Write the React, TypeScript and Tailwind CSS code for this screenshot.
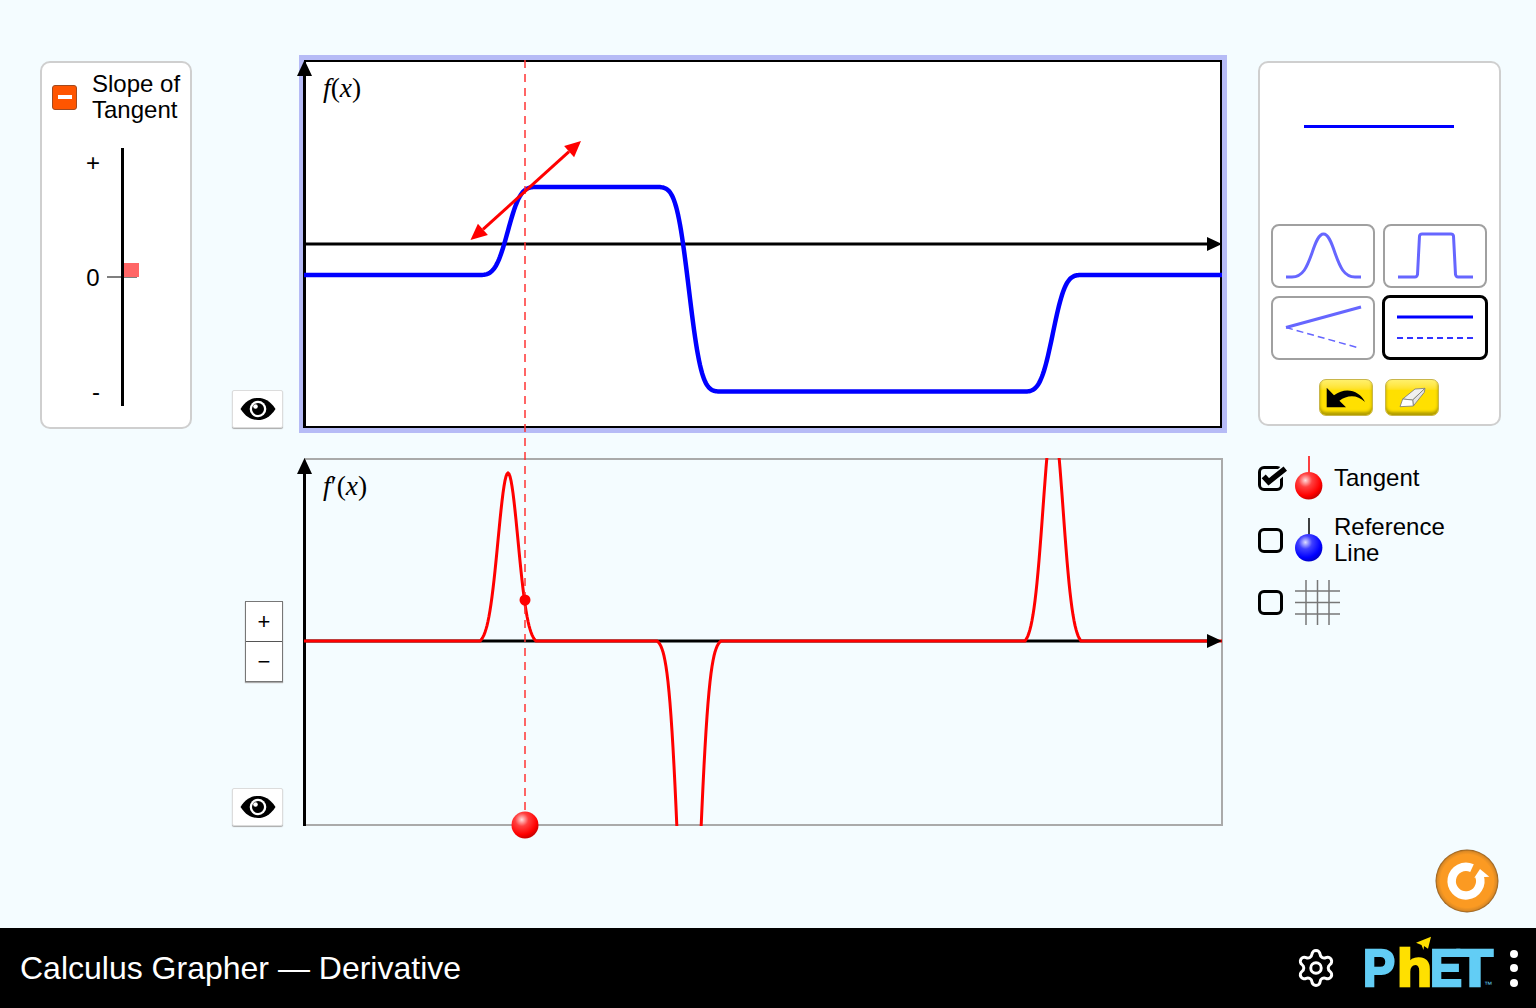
import React from "react";
import { Settings } from "lucide-react";

const S = 10;
const kernel = (x: number, c: number, e = 0.02) => {
  const g = Math.exp(-((x - c) * (x - c)) / (2 * S * S));
  return Math.max(0, (g - e) / (1 - e));
};
const area = (e: number) => {
  let a = 0;
  for (let x = -60; x <= 60; x += 0.25) a += kernel(x, 0, e) * 0.25;
  return a;
};
const AREA = area(0.02);
const AREA_WIDE = area(0.006);

function fPath() {
  const pts: string[] = [];
  let a = 0,
    b = 0,
    c = 0;
  for (let x = 304; x <= 1222; x += 0.25) {
    a += (kernel(x, 508) * 0.25) / AREA;
    b += (kernel(x, 689, 0.006) * 0.25) / AREA_WIDE;
    c += (kernel(x, 1053) * 0.25) / AREA;
    if (x % 1 === 0) pts.push(`${x},${(275 - 88 * a + 204.500 * b - 116.500 * c).toFixed(2)}`);
  }
  return "M" + pts.join("L");
}
function dPath() {
  const pts: string[] = [];
  for (let x = 304; x <= 1222; x += 1) {
    const y = 641 - 168 * kernel(x, 508) + 390 * kernel(x, 689, 0.006) - 222 * kernel(x, 1053);
    pts.push(`${x},${y.toFixed(2)}`);
  }
  return "M" + pts.join("L");
}

function Eye() {
  return (
    <button className="w-[51px] h-[38px] bg-white border border-[#dcdcdc] rounded-[2px] shadow-[0_1px_1px_#aaa] flex items-center justify-center">
      <svg width="36" height="24" viewBox="0 0 36 24">
        <path d="M0.500 12C6 3.500 12 1 18 1s12 2.500 17.500 11C30 20.500 24 23 18 23S6 20.500 0.500 12Z" fill="#000" />
        <circle cx="18" cy="12" r="8.300" fill="#fff" />
        <circle cx="18" cy="12" r="6" fill="#000" />
        <circle cx="15.500" cy="9.500" r="2.300" fill="#fff" />
      </svg>
    </button>
  );
}

function Ball({ color, line }: { color: "red" | "blue"; line: string }) {
  const id = color === "red" ? "ballRed" : "ballBlue";
  return (
    <svg width="28" height="44" viewBox="0 0 28 44" className="shrink-0">
      <line x1="14" y1="0" x2="14" y2="17" stroke={line} strokeWidth="1.500" />
      <circle cx="13.700" cy="29.800" r="13.700" fill={`url(#${id})`} />
    </svg>
  );
}

function Check({ checked }: { checked?: boolean }) {
  return (
    <div className="relative w-[25px] h-[25px] shrink-0 border-[3px] border-black rounded-[6px]">
      {checked && (
        <svg className="absolute left-0 top-0 overflow-visible" width="19" height="19" viewBox="0 0 19 19">
          <path d="M7.700 14L24.300 -0.300" fill="none" stroke="#f4fcff" strokeWidth="9" />
          <path d="M2.700 7.300L7.700 12.800L24.300 -0.300" fill="none" stroke="#000" strokeWidth="5.500" />
        </svg>
      )}
    </div>
  );
}

function Preset({ selected, children }: { selected?: boolean; children: React.ReactNode }) {
  return (
    <div
      className={
        selected
          ? "w-[106px] h-[65px] -m-[1px] bg-white border-[3px] border-black rounded-[8px] overflow-hidden"
          : "w-[104px] h-[64px] bg-white border-2 border-[#a0a0a0] rounded-[8px] overflow-hidden"
      }
    >
      {children}
    </div>
  );
}

function YellowButton({ children }: { children: React.ReactNode }) {
  return (
    <button className="w-[54px] h-[37px] rounded-[7px] border border-[#c9b64a] bg-linear-to-b from-[#fff06a] via-[#ffe000] via-30% to-[#ffe000] shadow-[inset_0_-3px_3px_#b09c00] flex items-center justify-center">
      {children}
    </button>
  );
}

export default function App() {
  const f = fPath();
  const d = dPath();
  return (
    <div className="w-[1536px] h-[1008px] flex flex-col overflow-hidden font-['Liberation_Sans',Arial,sans-serif] text-black">
      <main className="relative flex-1 min-h-0 flex items-stretch bg-[#f4fcff] pl-[40px]">
        {/* Slope of tangent */}
        <div className="w-[152px] h-[368px] mt-[61px] bg-white border-2 border-[#cfcfcf] rounded-[10px] flex flex-col">
          <div className="flex items-center pl-[10px] pt-[8px] gap-[15px]">
            <div className="w-[25px] h-[25px] bg-[#ff5500] border border-[#a04a20] rounded-[3px] flex items-center justify-center">
              <div className="w-[14px] h-[4px] bg-white" />
            </div>
            <div className="text-[24px] leading-[26px]">
              Slope of
              <br />
              Tangent
            </div>
          </div>
          <svg className="block mt-[12px]" width="148" height="280" viewBox="0 0 148 280">
            <rect x="79" y="13" width="3" height="258" fill="#000" />
            <rect x="65" y="141.500" width="30" height="1" fill="#000" />
            <rect x="82" y="128" width="15" height="14" fill="#ff6666" />
            <text x="51" y="36" textAnchor="middle" fontSize="24">+</text>
            <text x="51" y="151" textAnchor="middle" fontSize="24">0</text>
            <text x="54" y="265" textAnchor="middle" fontSize="24">-</text>
          </svg>
        </div>

        {/* Eye and zoom buttons */}
        <div className="ml-[40px] w-[51px] flex flex-col items-end">
          <div className="mt-[390px]">
            <Eye />
          </div>
          <div className="mt-[173px] w-[38px] h-[81px] bg-white border border-[#777777] flex flex-col text-[22px] leading-none shadow-[0_1px_1px_#aaa]">
            <div className="flex-1 flex items-center justify-center border-b border-[#555555]">+</div>
            <div className="flex-1 flex items-center justify-center">−</div>
          </div>
          <div className="mt-[106px]">
            <Eye />
          </div>
        </div>

        {/* Graphs */}
        <div className="ml-[16px] w-[928px] pt-[55px] flex flex-col">
          <div className="relative w-[928px] h-[378px] border-[5px] border-[#b6bbf6] bg-white">
            <div className="w-full h-full border-2 border-black" />
            <div className="absolute left-[19px] top-[13px] font-['Liberation_Serif',serif] text-[27.500px] leading-[30px] whitespace-nowrap">
              <i>f</i>(<i>x</i>)
            </div>
          </div>
          <div className="relative ml-[5px] mt-[25px] w-[919px] h-[368px] border-2 border-[#aaaaaa]">
            <div className="absolute left-[17px] top-[11px] font-['Liberation_Serif',serif] text-[27.500px] leading-[30px] whitespace-nowrap">
              <i>f</i>
              <span>′</span>(<i>x</i>)
            </div>
          </div>
        </div>

        {/* Right column */}
        <div className="ml-[31px] w-[242px] flex flex-col">
          <div className="mt-[61px] h-[365px] w-[243px] bg-white border-2 border-[#cfcfcf] rounded-[10px] flex flex-col">
            <svg className="block shrink-0" width="239" height="161" viewBox="0 0 239 161">
              <line x1="44" y1="63.500" x2="194" y2="63.500" stroke="#0000ff" strokeWidth="3" />
            </svg>
            <div className="grid grid-cols-[104px_104px] gap-x-[8px] gap-y-[8px] ml-[11px]">
              <Preset>
                <svg viewBox="0 0 100 60" className="block w-full h-full">
                  <path
                    d="M13 51H19C30 51 34 41 39 27C43 15 46 8 50.500 8S58 15 62 27C67 41 71 51 82 51H88"
                    fill="none"
                    stroke="#6666ff"
                    strokeWidth="3"
                  />
                </svg>
              </Preset>
              <Preset>
                <svg viewBox="0 0 100 60" className="block w-full h-full">
                  <path
                    d="M13 51H30Q32 51 32.500 48.500L34.500 10Q35 8 37 8H66Q68 8 68.500 10L70.500 48.500Q71 51 73 51H88"
                    fill="none"
                    stroke="#6666ff"
                    strokeWidth="3"
                  />
                </svg>
              </Preset>
              <Preset>
                <svg viewBox="0 0 100 60" className="block w-full h-full">
                  <line x1="13" y1="29.500" x2="88" y2="9" stroke="#6666ff" strokeWidth="3" />
                  <line x1="13" y1="29.500" x2="86" y2="50" stroke="#6666ff" strokeWidth="1.500" strokeDasharray="7 4" />
                </svg>
              </Preset>
              <Preset selected>
                <svg viewBox="0 0 100 59" className="block w-full h-full">
                  <line x1="12" y1="19" x2="88" y2="19" stroke="#0000ff" strokeWidth="3" />
                  <line x1="12" y1="40" x2="88" y2="40" stroke="#3333ff" strokeWidth="2" strokeDasharray="6 4" />
                </svg>
              </Preset>
            </div>
            <div className="flex gap-[12px] ml-[59px] mt-[19px]">
              <YellowButton>
                <svg width="54" height="37" viewBox="0 0 54 37" className="shrink-0">
                  <path d="M7.700 8.700V28.300H27L20.400 21.700C28 16 38 15 46 23C41 12 27 7 15 16.200Z" fill="#000" />
                </svg>
              </YellowButton>
              <YellowButton>
                <svg width="54" height="37" viewBox="0 0 54 37" className="shrink-0" stroke="#777" strokeWidth="0.800" strokeLinejoin="round">
                  <polygon points="17.700,20 30,10 40,9.300 27.700,21" fill="#f0f0f0" />
                  <polygon points="27.700,21 40,9.300 39.300,13.300 28.300,27" fill="#e4e4e4" />
                  <polygon points="17.700,20 27.700,21 28.300,27 15,27.700" fill="#ffffff" />
                </svg>
              </YellowButton>
            </div>
          </div>

          <div className="mt-[30px] flex items-center gap-[12px] h-[44px]">
            <Check checked />
            <Ball color="red" line="#ff0000" />
            <span className="ml-[-1px] text-[24px] leading-[26px]">Tangent</span>
          </div>
          <div className="mt-[18px] flex items-center gap-[12px] h-[44px]">
            <Check />
            <Ball color="blue" line="#000000" />
            <span className="ml-[-1px] text-[24px] leading-[26px]">
              Reference
              <br />
              Line
            </span>
          </div>
          <div className="mt-[18px] flex items-center gap-[12px] h-[45px]">
            <Check />
            <svg width="45" height="45" viewBox="0 0 45 45" className="shrink-0" stroke="#777777" strokeWidth="1.500">
              <line x1="11" y1="0" x2="11" y2="45" />
              <line x1="22.500" y1="0" x2="22.500" y2="45" />
              <line x1="34" y1="0" x2="34" y2="45" />
              <line x1="0" y1="11" x2="45" y2="11" />
              <line x1="0" y1="22.500" x2="45" y2="22.500" />
              <line x1="0" y1="34" x2="45" y2="34" />
            </svg>
          </div>

          <button className="mt-auto mb-[15px] mr-[1px] self-end w-[64px] h-[64px]">
            <svg width="64" height="64" viewBox="0 0 64 64" className="block">
              <defs>
                <radialGradient id="resetGrad" cx="50%" cy="50%" r="50%">
                  <stop offset="0%" stopColor="#fb9a22" />
                  <stop offset="84%" stopColor="#fb9a22" />
                  <stop offset="94%" stopColor="#dd8a25" />
                  <stop offset="100%" stopColor="#8a5a20" />
                </radialGradient>
              </defs>
              <circle cx="32" cy="32" r="31.500" fill="url(#resetGrad)" />
              <path d="M44.300 27A14.300 14.300 0 1 1 37 19.200" fill="none" stroke="#fff" strokeWidth="8.500" />
              <polygon points="45,20 39.300,28.700 54.300,27.700" fill="#fff" />
            </svg>
          </button>
        </div>

        {/* Overlay: axes, curves, tangent, spanning both graphs */}
        <svg className="absolute left-0 top-0 pointer-events-none" width="1536" height="928" viewBox="0 0 1536 928">
          <defs>
            <clipPath id="clipD">
              <rect x="300" y="458" width="923" height="368" />
            </clipPath>
            <radialGradient id="ballRed" cx="38%" cy="30%" r="70%">
              <stop offset="0%" stopColor="#ffdddd" />
              <stop offset="35%" stopColor="#ff4040" />
              <stop offset="80%" stopColor="#ff0000" />
              <stop offset="100%" stopColor="#cc0000" />
            </radialGradient>
            <radialGradient id="ballBlue" cx="38%" cy="30%" r="70%">
              <stop offset="0%" stopColor="#ddddff" />
              <stop offset="35%" stopColor="#4040ff" />
              <stop offset="80%" stopColor="#0000ff" />
              <stop offset="100%" stopColor="#0000cc" />
            </radialGradient>
          </defs>

          {/* graph 1 axes */}
          <line x1="304" y1="244" x2="1210" y2="244" stroke="#000" strokeWidth="3" />
          <polygon points="1222,244 1207,237 1207,251" fill="#000" />
          <line x1="304.500" y1="428" x2="304.500" y2="72" stroke="#000" strokeWidth="3" />
          <polygon points="304.500,60 297,76 312,76" fill="#000" />

          {/* graph 2 axes */}
          <line x1="304" y1="641" x2="1210" y2="641" stroke="#000" strokeWidth="3" />
          <line x1="304.500" y1="826" x2="304.500" y2="470" stroke="#000" strokeWidth="3" />
          <polygon points="304.500,458 297,474 312,474" fill="#000" />

          {/* curves */}
          <path d={f} fill="none" stroke="#0000ff" strokeWidth="4.500" />
          <path d={d} fill="none" stroke="#ff0000" strokeWidth="3" clipPath="url(#clipD)" />
          <polygon points="1222,641 1207,634 1207,648" fill="#000" />

          {/* tangent */}
          <line x1="525" y1="60" x2="525" y2="825" stroke="#ff3333" strokeWidth="1.500" strokeDasharray="8 6" />
          <line x1="483" y1="229.300" x2="569" y2="151.700" stroke="#ff0000" strokeWidth="3" />
          <polygon points="581,141 574.100,157.300 564.100,146.100" fill="#ff0000" />
          <polygon points="470.500,240 487.900,234.900 477.900,223.700" fill="#ff0000" />
          <circle cx="525" cy="600" r="5.500" fill="#ff0000" />
          <circle cx="525" cy="825" r="13.500" fill="url(#ballRed)" />
        </svg>
      </main>

      {/* Nav bar */}
      <footer className="h-[80px] bg-black flex items-center pl-[20px] text-white shrink-0">
        <span className="text-[32px] leading-none whitespace-nowrap">Calculus Grapher — Derivative</span>
        <Settings className="ml-auto" size={42} strokeWidth={1.700} color="#fff" />
        <svg className="ml-[21px]" width="140" height="72" viewBox="0 0 140 72" fontWeight="bold" fontSize="52">
          <text x="5" y="54" textLength="32" lengthAdjust="spacingAndGlyphs" fill="#62cdf5" stroke="#62cdf5" strokeWidth="2.500">P</text>
          <text x="39" y="54" textLength="35" lengthAdjust="spacingAndGlyphs" fill="#ffe000" stroke="#ffe000" strokeWidth="2.500">h</text>
          <text x="72" y="54" textLength="32" lengthAdjust="spacingAndGlyphs" fill="#62cdf5" stroke="#62cdf5" strokeWidth="2.500">E</text>
          <text x="99" y="54" textLength="36" lengthAdjust="spacingAndGlyphs" fill="#62cdf5" stroke="#62cdf5" strokeWidth="2.500">T</text>
          <polygon points="58,10.700 73,4.700 70,16.700 66,14 65.500,18 63.500,13" fill="#ffe000" />
          <text x="126" y="55" fill="#62cdf5" fontSize="8" fontWeight="normal">™</text>
        </svg>
        <div className="ml-[12px] mr-[18px] flex flex-col gap-[6.500px]">
          <div className="w-[8px] h-[8px] rounded-full bg-white" />
          <div className="w-[8px] h-[8px] rounded-full bg-white" />
          <div className="w-[8px] h-[8px] rounded-full bg-white" />
        </div>
      </footer>
    </div>
  );
}
